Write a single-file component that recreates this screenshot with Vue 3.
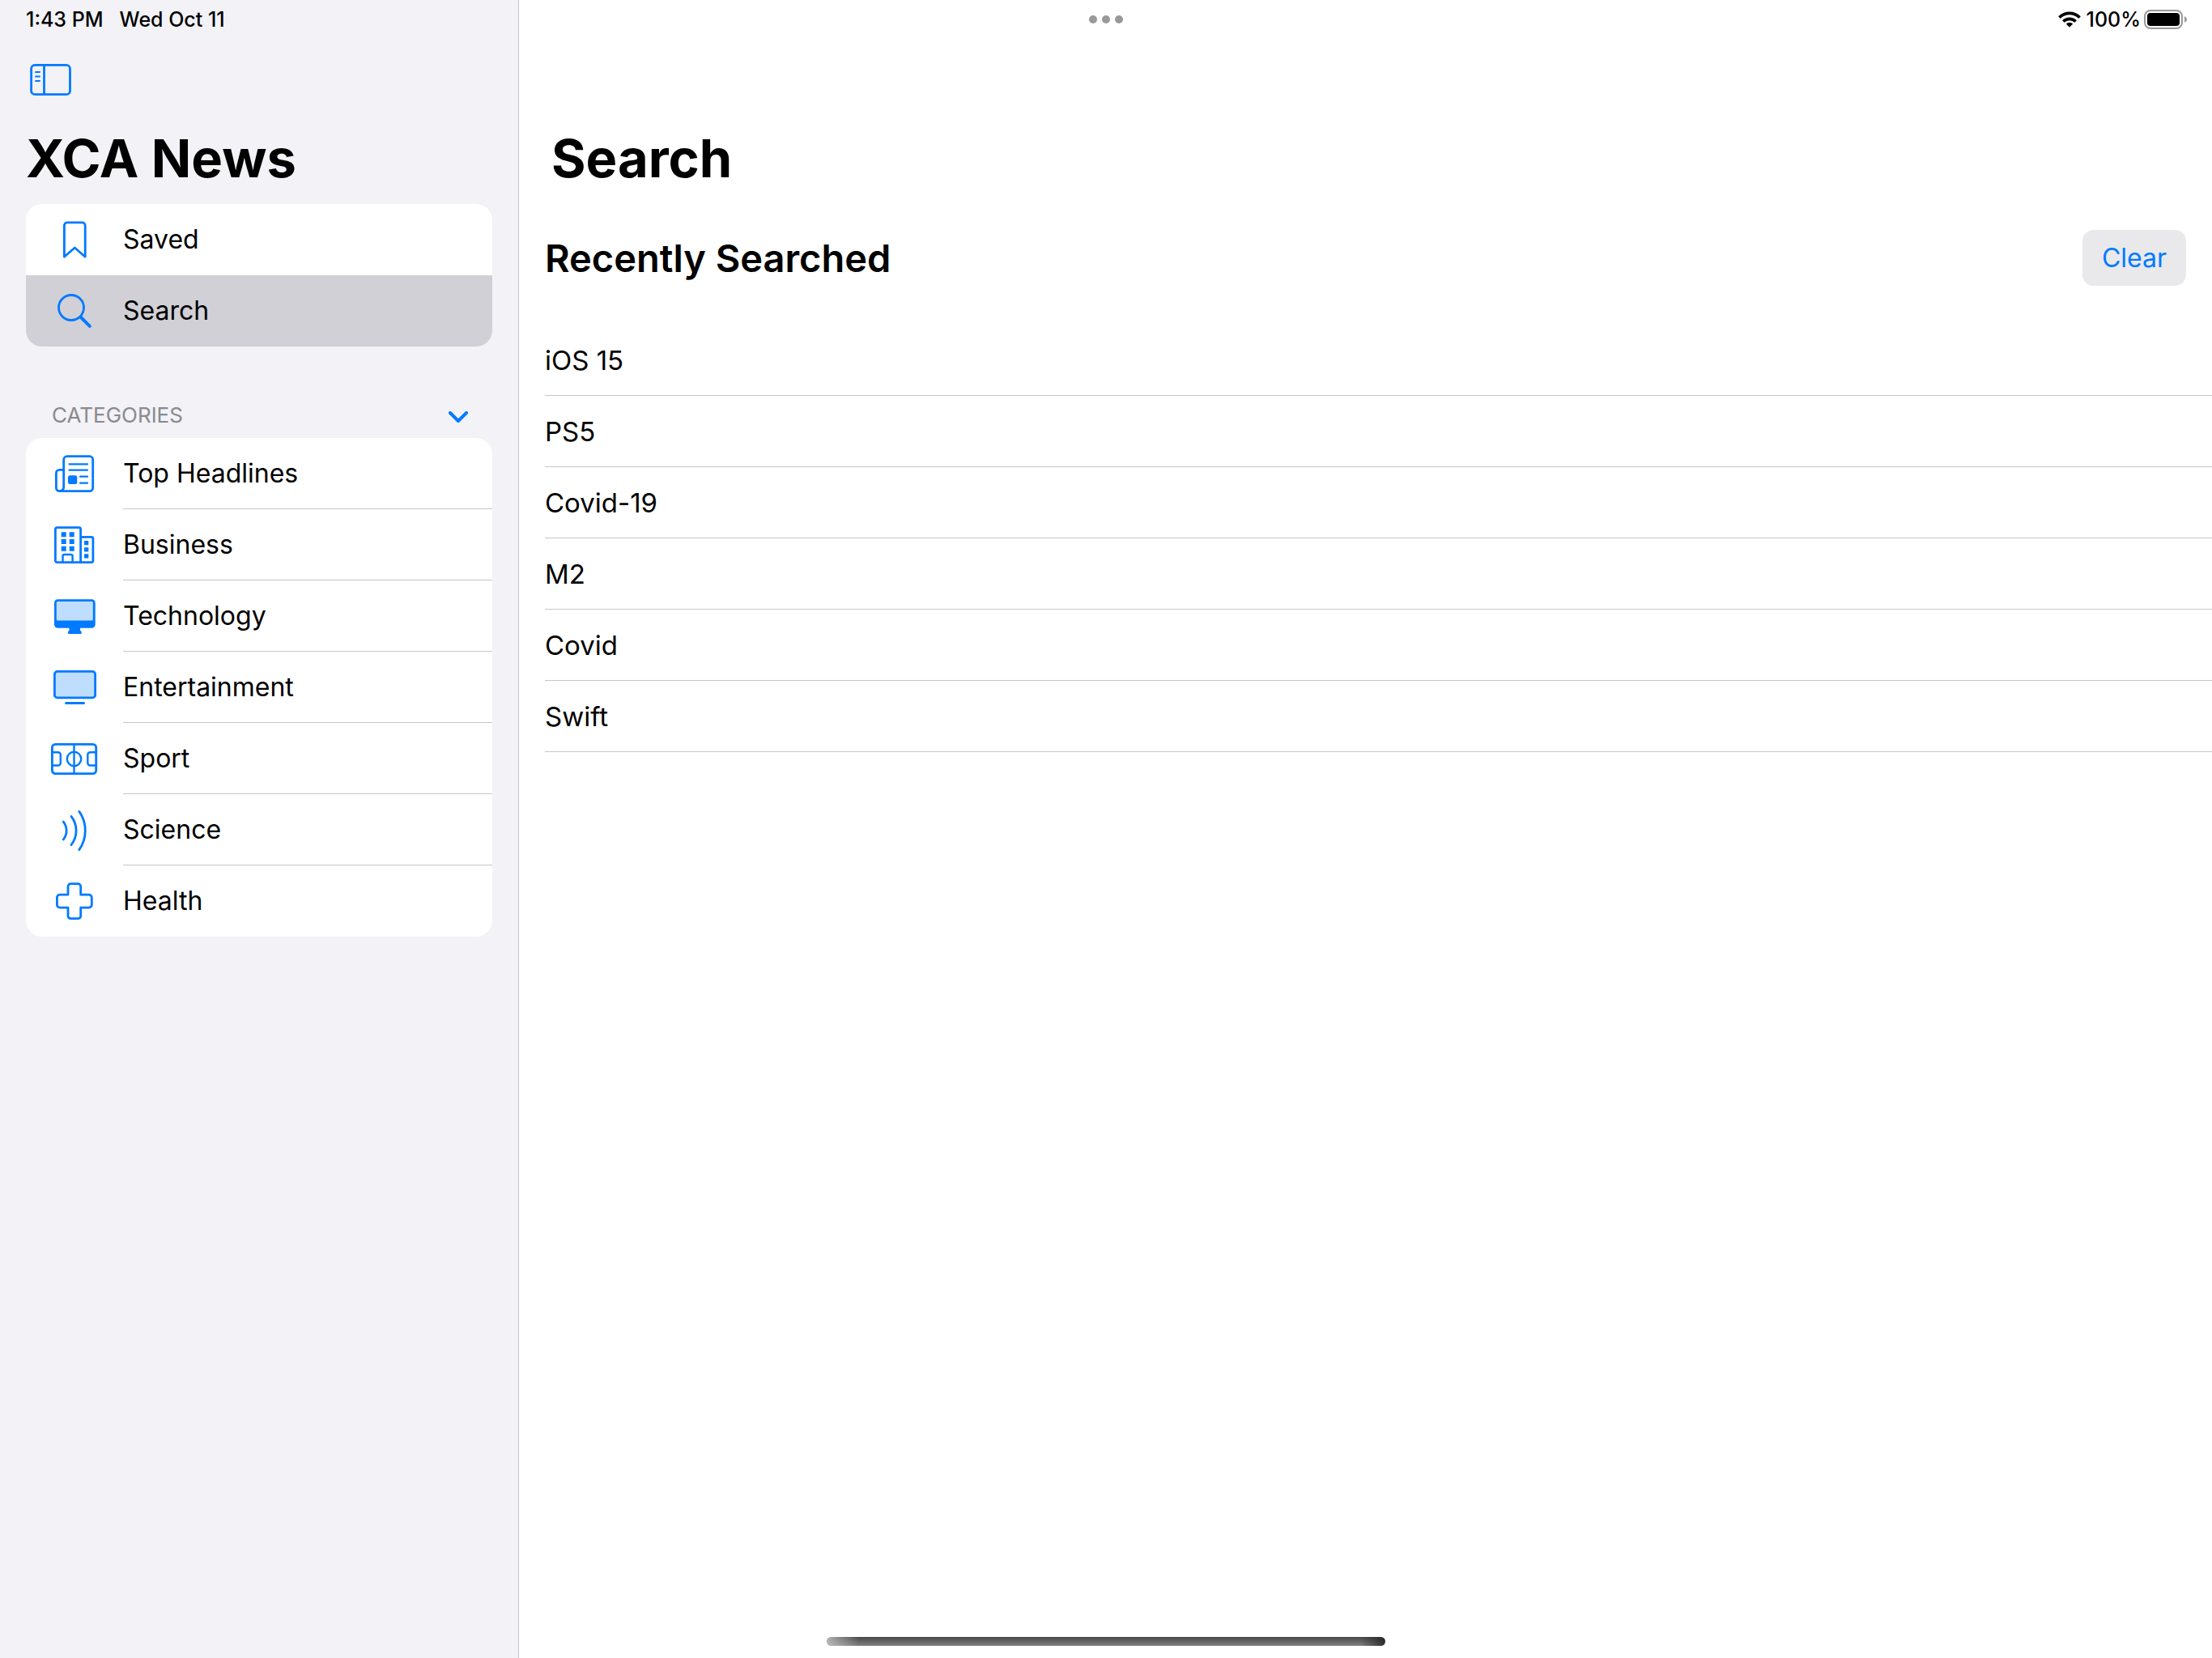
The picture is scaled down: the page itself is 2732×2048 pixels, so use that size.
<script setup>
import { ref } from 'vue'

const expanded = ref(true)
const sidebarOpen = ref(true)
const current = ref('search')

const shortcuts = [
  { id: 'saved', label: 'Saved' },
  { id: 'search', label: 'Search' },
]

const categories = [
  { id: 'headlines', label: 'Top Headlines' },
  { id: 'business', label: 'Business' },
  { id: 'technology', label: 'Technology' },
  { id: 'entertainment', label: 'Entertainment' },
  { id: 'sport', label: 'Sport' },
  { id: 'science', label: 'Science' },
  { id: 'health', label: 'Health' },
]

const icons = {
  saved:
    '<path d="M17.4 51.2V12.6a3.7 3.7 0 0 1 3.7-3.7h18.4a3.7 3.7 0 0 1 3.7 3.7v38.6L30.3 40z"/>',
  search:
    '<circle cx="26" cy="26" r="15.5"/><path d="M38 38 48.8 48.8" stroke-width="4"/>',
  headlines:
    '<path d="M16.7 47V12.7a4 4 0 0 1 4-4h28a4 4 0 0 1 4 4v34.9a4 4 0 0 1-4 4H11.4a4 4 0 0 1-4-4V29.4a4 4 0 0 1 4-4h5.3M16.7 46.5a4.9 4.9 0 0 1-4.9 5.1"/><path d="M23.5 18.3h22.5M23.5 25.7h22.5M37 33.7h9M37 41.7h9" stroke-width="2.2"/><rect x="22" y="32.3" width="11.3" height="10.7" rx="2.5" fill="#007aff" stroke="none"/>',
  business:
    '<path d="M6.4 49.6V10.7a2 2 0 0 1 2-2h27.2a2 2 0 0 1 2 2v40.9H8.4a2 2 0 0 1-2-2zM37.6 20.4h13.3a2 2 0 0 1 2 2v27.2a2 2 0 0 1-2 2H37.6"/><path d="M15.5 51.5V44a2 2 0 0 1 2-2h8.1a2 2 0 0 1 2 2v7.5" stroke-width="2.4"/><path d="M13.7 14.3h6v6h-6zM23.7 14.3h6v6h-6zM13.7 23h6v6h-6zM23.7 23h6v6h-6zM13.7 31.7h6v6h-6zM23.7 31.7h6v6h-6zM42 25h5.3v5.3H42zM42 33.3h5.3v5.3H42zM42 41.3h5.3v5.3H42z" fill="#007aff" stroke="none"/>',
  technology:
    '<rect x="5" y="9.3" width="50.7" height="35.4" rx="4.5" fill="#007aff" stroke="none"/><rect x="7.8" y="12" width="45" height="23.6" rx="1.5" fill="#bfdeff" stroke="none"/><path d="M23.5 44h13.5v3.8l1.7 1.4v1.8a1 1 0 0 1-1 1H23a1 1 0 0 1-1-1v-1.8l1.5-1.4z" fill="#007aff" stroke="none"/>',
  entertainment:
    '<rect x="5.4" y="10.4" width="50.2" height="32.5" rx="3.5" fill="#bfdeff"/><path d="M19.6 49.5h21.9" stroke-width="3"/>',
  sport:
    '<rect x="2.4" y="12.4" width="54.3" height="36.2" rx="4"/><g stroke-width="2.4"><path d="M29.5 12.4v36.2M2.4 22.2h7.4a3 3 0 0 1 3 3v10.3a3 3 0 0 1-3 3H2.4M56.7 22.2h-7.4a3 3 0 0 0-3 3v10.3a3 3 0 0 0 3 3h7.4"/><circle cx="29.5" cy="30.4" r="8.7"/></g>',
  science:
    '<path d="M16.3 20.1a17.5 17.5 0 0 1 0 21.8M26 13.4a28.5 28.5 0 0 1 0 35.2M35.8 7.4a41 41 0 0 1 0 47.2"/>',
  health:
    '<path d="M22 22.2V12.2a3.5 3.5 0 0 1 3.5-3.5h8.7a3.5 3.5 0 0 1 3.5 3.5v10h10.1a3.5 3.5 0 0 1 3.5 3.5v8.9a3.5 3.5 0 0 1-3.5 3.5H37.7v10.1a3.5 3.5 0 0 1-3.5 3.5h-8.7a3.5 3.5 0 0 1-3.5-3.5V38.1H11.9a3.5 3.5 0 0 1-3.5-3.5v-8.9a3.5 3.5 0 0 1 3.5-3.5z"/>',
}

const recent = ref(['iOS 15', 'PS5', 'Covid-19', 'M2', 'Covid', 'Swift'])
</script>

<template>
  <div class="app">
    <header class="status">
      <div class="status-left">
        <span>1:43 PM</span>
        <span>Wed Oct 11</span>
      </div>
      <div class="dots"><i></i><i></i><i></i></div>
      <div class="status-right">
        <svg class="wifi" viewBox="0 0 28 20" aria-label="Wi-Fi">
          <g fill="none" stroke="#000" stroke-width="3.8">
            <path d="M1.5 7.6a17.6 17.6 0 0 1 25 0" />
            <path d="M6.4 12.5a10.7 10.7 0 0 1 15.2 0" />
          </g>
          <path d="M14 19.8l-4.2-4.3a6 6 0 0 1 8.4 0z" />
        </svg>
        <span>100%</span>
        <svg class="battery" viewBox="0 0 54 24" aria-label="Battery full">
          <rect x="1" y="1" width="46" height="22" rx="7" fill="none" stroke="#999" stroke-width="2" />
          <rect x="4" y="4" width="40" height="16" rx="4" />
          <path d="M50 8q3 1.5 3 4t-3 4z" fill="#999" />
        </svg>
      </div>
    </header>

    <aside v-show="sidebarOpen" class="sidebar">
      <div class="toolbar">
        <button class="toggle" type="button" aria-label="Toggle sidebar" @click="sidebarOpen = false">
          <svg viewBox="0 0 52 40" fill="none" stroke="#007aff" stroke-width="2.8" stroke-linecap="round">
            <rect x="1.6" y="1.4" width="47.9" height="36.3" rx="4.5" />
            <path d="M17.5 1.4v36.3" />
            <path d="M7 10h5M7 15.5h5M7 21h5" stroke-width="2" />
          </svg>
        </button>
      </div>
      <h1 class="title">XCA News</h1>

      <nav class="card" aria-label="Library">
        <a
          v-for="item in shortcuts"
          :key="item.id"
          href="#"
          class="row"
          :class="{ selected: current === item.id }"
          @click.prevent="current = item.id"
        >
          <svg class="icon" viewBox="0 0 60 60" v-html="icons[item.id]"></svg>
          <span class="label">{{ item.label }}</span>
        </a>
      </nav>

      <div class="section">
        <h2 class="section-name">CATEGORIES</h2>
        <button class="chevron" type="button" aria-label="Toggle categories" @click="expanded = !expanded">
          <svg viewBox="0 0 24 14" fill="none" stroke="#007aff" stroke-width="4" stroke-linecap="round" stroke-linejoin="round">
            <path d="M2 2l10 10L22 2" />
          </svg>
        </button>
      </div>

      <nav v-if="expanded" class="card divided" aria-label="Categories">
        <a
          v-for="item in categories"
          :key="item.id"
          href="#"
          class="row"
          :class="{ selected: current === item.id }"
          @click.prevent="current = item.id"
        >
          <svg class="icon" viewBox="0 0 60 60" v-html="icons[item.id]"></svg>
          <span class="label">{{ item.label }}</span>
        </a>
      </nav>
    </aside>

    <main class="main">
      <h1 class="title">Search</h1>
      <div class="heading">
        <h2>Recently Searched</h2>
        <button class="clear" type="button" @click="recent = []">Clear</button>
      </div>
      <ul class="recent">
        <li v-for="term in recent" :key="term">
          <button type="button">{{ term }}</button>
        </li>
      </ul>
    </main>

    <div class="home"></div>
  </div>
</template>

<style>
body {
  margin: 0;
  background: #fff;
}
</style>

<style scoped>
.app {
  position: relative;
  display: flex;
  min-height: 100vh;
  font-family: Inter, "Liberation Sans", sans-serif;
  font-size: 32px;
  line-height: 40px;
  color: #000;
}

button {
  padding: 0;
  border: 0;
  background: none;
  font: inherit;
  color: inherit;
  cursor: pointer;
}

svg {
  display: block;
}

h1,
h2,
ul {
  margin: 0;
  padding: 0;
}

.status {
  position: absolute;
  top: 0;
  left: 0;
  right: 0;
  display: grid;
  grid-template-columns: 1fr auto 1fr;
  align-items: center;
  height: 48px;
  padding: 0 30px;
  box-sizing: border-box;
  font-size: 25px;
  line-height: 28px;
  font-weight: 500;
}

.status-left {
  display: flex;
  gap: 20px;
  padding-left: 2px;
}

.status-right {
  display: flex;
  justify-content: flex-end;
  align-items: center;
}

.wifi {
  width: 28px;
  height: 20px;
  margin-right: 7px;
}

.battery {
  width: 54px;
  height: 24px;
  margin-left: 4px;
}

.dots {
  display: flex;
  gap: 6px;
}

.dots i {
  width: 10px;
  height: 10px;
  border-radius: 50%;
  background: #999;
}

.sidebar {
  flex: none;
  width: 576px;
  padding: 48px 32px 32px;
  border-right: 1px solid #c6c6c8;
  background: #f2f2f7;
}

.toolbar {
  display: flex;
  align-items: center;
  box-sizing: border-box;
  height: 100px;
  padding: 2px 0 0 5px;
}

.toggle svg {
  width: 52px;
  height: 40px;
}

.title {
  font-size: 65px;
  line-height: 96px;
  font-weight: 700;
}

.card {
  border-radius: 20px;
  background: #fff;
  overflow: hidden;
}

.title + .card {
  margin-top: 8px;
}

.row {
  display: flex;
  gap: 30px;
  height: 88px;
  padding-left: 30px;
  color: inherit;
  text-decoration: none;
}

.selected {
  background: #d1d0d6;
}

.icon {
  flex: none;
  width: 60px;
  height: 60px;
  margin-top: 14px;
  fill: none;
  stroke: #007aff;
  stroke-width: 2.8px;
  stroke-linecap: round;
  stroke-linejoin: round;
}

.label {
  flex: 1;
  display: flex;
  align-items: center;
  box-sizing: border-box;
}

.divided .row:not(:last-child) .label {
  border-bottom: 1px solid #c6c6c8;
}

.section {
  display: flex;
  align-items: center;
  justify-content: space-between;
  height: 53px;
  padding: 60px 30px 0 32px;
}

.section-name {
  padding-bottom: 4px;
  font-size: 26px;
  line-height: 32px;
  font-weight: 400;
  color: #8a8a8e;
}

.chevron svg {
  width: 24px;
  height: 14px;
}

.main {
  flex: 1;
  min-width: 0;
  padding: 148px 0 48px 32px;
}

.main .title {
  padding-left: 8px;
}

.heading {
  display: flex;
  align-items: center;
  justify-content: space-between;
  padding: 40px 32px 48px 0;
}

.heading h2 {
  font-size: 47px;
  line-height: 56px;
  font-weight: 600;
}

.clear {
  height: 69px;
  padding: 0 24px;
  border-radius: 14px;
  background: #e9e9eb;
  color: #007aff;
}

.recent {
  list-style: none;
  font-size: 33px;
}

.recent button {
  display: block;
  width: 100%;
  height: 88px;
  border-bottom: 1px solid #c6c6c8;
  text-align: left;
}

.home {
  position: absolute;
  bottom: 15px;
  left: 50%;
  width: 690px;
  height: 11px;
  margin-left: -345px;
  border-radius: 6px;
  background:
    linear-gradient(90deg, rgba(200, 200, 200, 0.8), rgba(200, 200, 200, 0) 40px),
    linear-gradient(270deg, rgba(30, 30, 30, 0.8), rgba(30, 30, 30, 0) 30px),
    linear-gradient(#484848, #808080);
}
</style>
